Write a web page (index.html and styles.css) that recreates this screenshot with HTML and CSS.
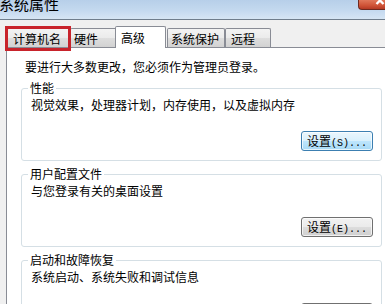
FILE: index.html
```html
<!DOCTYPE html>
<html lang="zh-CN">
<head>
<meta charset="utf-8">
<title>系统属性</title>
<link rel="stylesheet" href="styles.css">
</head>
<body>
<div class="window">
  <div class="titlebar">
    <span class="title">系统属性</span>
    <span class="close"><svg width="27" height="10" viewBox="0 0 27 10"><path d="M17.5 -4 L22 0.5 L26.5 -4 M22 0.5 L18.5 4 M22 0.5 L25.5 4" stroke="#fff" stroke-width="2.4" fill="none"/></svg></span>
  </div>
  <div class="tabs">
    <div class="tab t1"><span class="mark"></span>计算机名</div>
    <div class="tab t2">硬件</div>
    <div class="tab t3 active">高级</div>
    <div class="tab t4">系统保护</div>
    <div class="tab t5">远程</div>
  </div>
  <div class="panel">
    <p class="notice">要进行大多数更改，您必须作为管理员登录。</p>
    <fieldset class="group">
      <legend>性能</legend>
      <p class="desc">视觉效果，处理器计划，内存使用，以及虚拟内存</p>
      <div class="actions"><button class="btn focused">设置<span class="mn">(S)...</span></button></div>
    </fieldset>
    <fieldset class="group">
      <legend>用户配置文件</legend>
      <p class="desc">与您登录有关的桌面设置</p>
      <div class="actions"><button class="btn">设置<span class="mn">(E)...</span></button></div>
    </fieldset>
    <fieldset class="group">
      <legend>启动和故障恢复</legend>
      <p class="desc">系统启动、系统失败和调试信息</p>
      <div class="actions"><button class="btn">设置<span class="mn">(T)...</span></button></div>
    </fieldset>
  </div>
</div>
</body>
</html>
```
FILE: styles.css
```css
* { box-sizing: border-box; }
html, body { margin: 0; padding: 0; }
body {
  width: 385px;
  height: 304px;
  overflow: hidden;
  background: #f0f0f0;
  font-family: "Noto Sans CJK SC", "Noto Sans", sans-serif;
  font-size: 12px;
  color: #000;
}
.window { width: 385px; }
.titlebar {
  height: 20px;
  display: flex;
  justify-content: space-between;
  align-items: flex-start;
  background: linear-gradient(180deg, #b7cfe9 0%, #c4d9ef 55%, #d6e5f4 100%);
  border-bottom: 1px solid #6f7d8c;
}
.title {
  font-size: 15px;
  line-height: 15px;
  margin-top: -4px;
  margin-left: -1px;
  color: #000;
}
.close {
  display: block;
  width: 27px;
  height: 10px;
  background: linear-gradient(180deg, #e0775a 0%, #cf5337 60%, #b53a24 100%);
  border: 1px solid #6e2a20;
  border-top: 0;
  border-right: 0;
  border-radius: 0 0 0 4px;
  overflow: hidden;
}
.close svg { display: block; margin-left: -1px; }
.tabs {
  display: flex;
  align-items: flex-end;
  height: 27px;
  padding-left: 7px;
}
.tab {
  height: 19px;
  padding-top: 3px;
  line-height: 14px;
  white-space: nowrap;
  border: 1px solid #898c95;
  border-bottom: 0;
  border-radius: 2px 2px 0 0;
  background: linear-gradient(180deg, #f3f3f3 0%, #ebebeb 50%, #dedede 51%, #d2d2d2 100%);
}
.t1 { width: 63px; padding-left: 5px; position: relative; }
.t2 { width: 47px; padding-left: 3px; }
.t3 { width: 51px; padding-left: 5px; margin-left: -2px; }
.t4 { width: 58px; padding-left: 3px; margin-left: 1px; }
.t5 { width: 46px; padding-left: 5px; }
.tab.active {
  height: 22px;
  padding-top: 4px;
  margin-bottom: -1px;
  background: #fff;
  position: relative;
  z-index: 1;
}
.mark {
  position: absolute;
  left: -3px;
  top: -3px;
  width: 66px;
  height: 25px;
  border: 3px solid #c8232b;
  z-index: 2;
}
.panel {
  margin-left: 6px;
  width: 390px;
  height: 300px;
  background: #fff;
  border-top: 1px solid #898c95;
  border-left: 1px solid #898c95;
  padding: 12px 0 0 14px;
}
.notice {
  margin: 0 0 7px 0;
  padding-left: 4px;
  line-height: 14px;
}
.group {
  width: 361px;
  min-width: 0;
  margin: 0 0 6px 0;
  padding: 3px 8px 9px 9px;
  border: 1px solid #d5dfe5;
  border-radius: 3px;
}
.group legend {
  padding: 0 2px;
  margin-left: -3px;
  line-height: 14px;
}
.desc {
  margin: 0;
  line-height: 14px;
}
.actions {
  display: flex;
  justify-content: flex-end;
  margin-top: 19px;
}
.btn {
  width: 72px;
  height: 20px;
  padding: 0;
  font-family: "Noto Sans CJK SC", "Noto Sans", sans-serif;
  font-size: 12px;
  line-height: 18px;
  color: #000;
  border: 1px solid #707070;
  border-radius: 3px;
  background: linear-gradient(180deg, #f2f2f2 0%, #ebebeb 48%, #dddddd 50%, #cfcfcf 100%);
  box-shadow: inset 0 0 0 1px rgba(255,255,255,0.7);
}
.btn.focused {
  border-color: #3c7fb1;
  background: linear-gradient(180deg, #eaf6fd 0%, #d9f0fc 48%, #bee6fd 50%, #a7d9f5 100%);
}
.mn {
  font-family: "Liberation Mono", monospace;
  font-size: 10px;
}
```
